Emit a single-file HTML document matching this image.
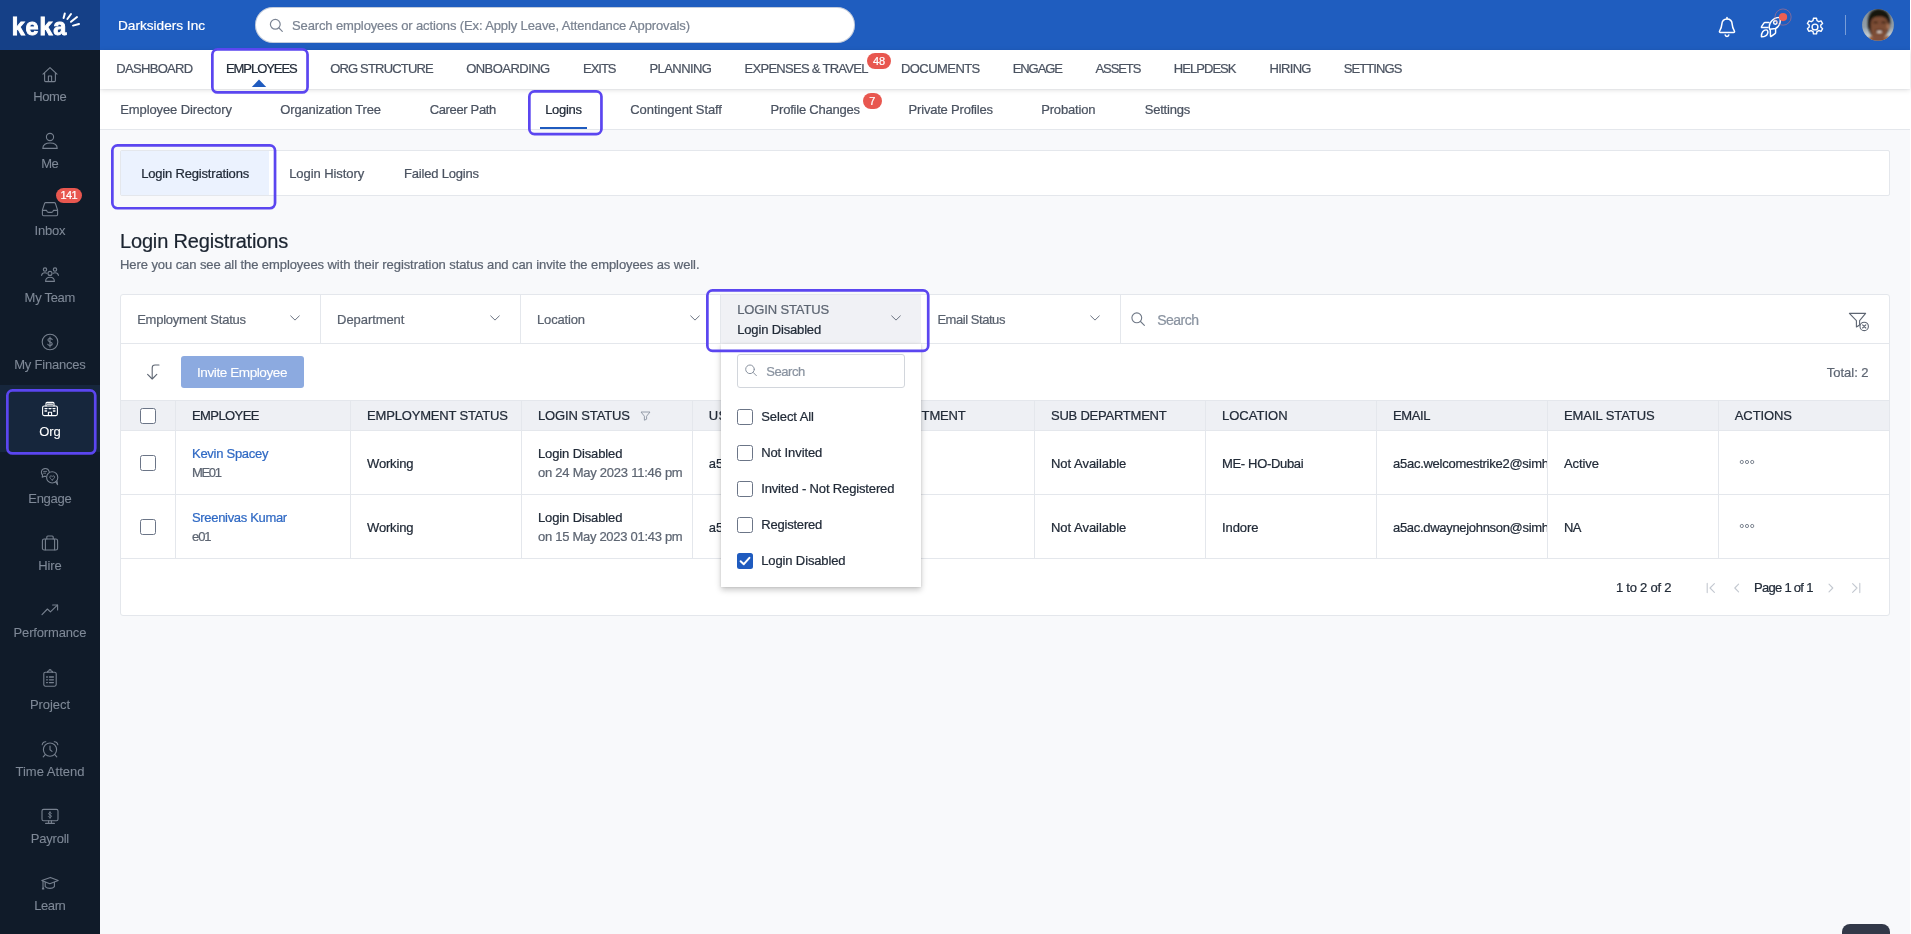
<!DOCTYPE html>
<html><head><meta charset="utf-8"><title>Keka</title>
<style>
html,body{margin:0;padding:0;background:#fff;}
body{width:1911px;height:934px;overflow:hidden;position:relative;font-family:'Liberation Sans', sans-serif;-webkit-text-stroke:0.22px currentColor;}
#root{position:absolute;left:0;top:0;width:1911px;height:934px;overflow:hidden;will-change:transform;}
svg{display:block;overflow:visible;}
</style></head><body><div id="root">
<div style="position:absolute;left:0px;top:0px;width:1910px;height:934px;background:#f8f9fb;"></div>
<div style="position:absolute;left:100px;top:0px;width:1810px;height:50px;background:#1f5dbf;"></div>
<div style="position:absolute;left:100px;top:90px;width:1810px;height:39px;background:#fff;border-bottom:1px solid #e4e7ec;"></div>
<div style="position:absolute;left:100px;top:50px;width:1810px;height:39px;background:#fff;box-shadow:0 1px 5px rgba(0,0,0,.13);"></div>
<div style="position:absolute;left:0px;top:0px;width:100px;height:934px;background:#101b29;"></div>
<div style="position:absolute;left:0px;top:0px;width:100px;height:50px;background:#154087;"></div>
<span style="position:absolute;left:11.8px;top:10.8px;height:33px;line-height:33px;font-size:23.4px;color:#fff;font-weight:700;white-space:pre;letter-spacing:0.784px;-webkit-text-stroke:0.9px #fff;">keka</span>
<svg style="position:absolute;left:60px;top:10px" width="24" height="20" viewBox="0 0 24 20">
<g stroke="#fff" stroke-width="2" stroke-linecap="round" fill="none">
<path d="M4.8 3.4 L3.6 8"/><path d="M11 4 L7.4 9"/><path d="M17 7 L11 11.8"/><path d="M19 14 L13 15.6"/></g></svg>
<span style="position:absolute;left:118px;top:16.0px;height:19px;line-height:19px;font-size:13.6px;color:#fff;font-weight:400;white-space:pre;letter-spacing:0.010px;">Darksiders Inc</span>
<div style="position:absolute;left:255px;top:7px;width:600px;height:36px;background:#fff;border-radius:18px;box-shadow:inset 0 0 0 1px rgba(20,50,110,.25);"></div>
<svg style="position:absolute;left:268px;top:17px" width="16" height="16" viewBox="0 0 16 16"><g fill="none" stroke="#7c8594" stroke-width="1.2" stroke-linecap="round"><circle cx="7.3" cy="7.3" r="4.9"/><path d="M11 11 L14.3 14.3"/></g></svg>
<span style="position:absolute;left:292px;top:16.5px;height:18px;line-height:18px;font-size:13px;color:#7a8391;font-weight:400;white-space:pre;letter-spacing:-0.123px;">Search employees or actions (Ex: Apply Leave, Attendance Approvals)</span>
<svg style="position:absolute;left:1707px;top:6px" width="40" height="40" viewBox="0 0 40 40"><g fill="none" stroke="#fff" stroke-width="1.5" stroke-linecap="round" stroke-linejoin="round">
<path d="M20 11.4 V12.8"/>
<path d="M20 13.1 C16.8 13.1 15 15.4 14.8 18.4 C14.6 21 14.4 22.2 12.7 24.8 C12.1 25.8 12.5 26.5 13.5 26.5 H26.5 C27.5 26.5 27.9 25.8 27.3 24.8 C25.6 22.2 25.4 21 25.2 18.4 C25 15.4 23.2 13.1 20 13.1 Z"/>
<path d="M18.2 28.9 C18.6 30 19.2 30.5 20 30.5 C20.8 30.5 21.4 30 21.8 28.9"/></g></svg>
<svg style="position:absolute;left:1752px;top:4px" width="48" height="40" viewBox="0 0 48 40"><g fill="none" stroke="#fff" stroke-width="1.45" stroke-linecap="round" stroke-linejoin="round">
<path d="M17.7 25.3 C15.9 20.4 20 13.3 27.9 13.4 C29.3 19 26.6 23 23.5 24.5 Z"/>
<circle cx="23.3" cy="18.5" r="1.75"/>
<path d="M17 18.5 H13 Q12.3 18.5 11.9 19.1 L9.5 22.7 Q9.1 23.5 10 23.5 H16"/>
<path d="M18.3 25.9 L18.5 32 Q18.5 32.8 19.2 32.4 L23 29.6 Q23.6 29.2 23.6 28.4 V24.8"/>
<path d="M9.4 32.7 C9.2 28.6 11.5 25.9 14 25.9 C15.7 25.9 16.3 27.5 15.6 29.4 C14.8 31.6 12.6 32.8 9.4 32.7 Z"/>
</g><circle cx="31.05" cy="13.06" r="8.1" fill="none" stroke="rgba(240,120,110,.45)" stroke-width="1"/><circle cx="31.05" cy="13.06" r="4.1" fill="#ea5f52"/></svg>
<svg style="position:absolute;left:1804px;top:16px" width="22" height="22" viewBox="0 0 24 24"><g fill="none" stroke="#fff" stroke-width="1.5" stroke-linejoin="round">
<path d="M10.3 2.5 h3.4 l.5 2.6 a7.3 7.3 0 0 1 1.9 1.1 l2.5 -.9 1.7 2.9 -2 1.7 a7.3 7.3 0 0 1 0 2.2 l2 1.7 -1.7 2.9 -2.5 -.9 a7.3 7.3 0 0 1 -1.9 1.1 l-.5 2.6 h-3.4 l-.5 -2.6 a7.3 7.3 0 0 1 -1.9 -1.1 l-2.5 .9 -1.7 -2.9 2 -1.7 a7.3 7.3 0 0 1 0 -2.2 l-2 -1.7 1.7 -2.9 2.5 .9 a7.3 7.3 0 0 1 1.9 -1.1 z"/>
<circle cx="12" cy="12" r="3.2"/></g></svg>
<div style="position:absolute;left:1845px;top:15px;width:1px;height:20px;background:rgba(255,255,255,.4);"></div>
<svg style="position:absolute;left:1858px;top:5px" width="40" height="40" viewBox="0 0 40 40"><defs><clipPath id="av"><circle cx="20" cy="19.9" r="15.9"/></clipPath><filter id="bl" x="-20%" y="-20%" width="140%" height="140%"><feGaussianBlur stdDeviation="0.9"/></filter>
<linearGradient id="avbg" x1="0" y1="0" x2="0" y2="1"><stop offset="0" stop-color="#7f8c97"/><stop offset="0.55" stop-color="#929ea8"/><stop offset="0.75" stop-color="#c2cace"/><stop offset="1" stop-color="#9aa5ad"/></linearGradient></defs>
<g clip-path="url(#av)"><rect width="40" height="40" fill="url(#avbg)"/><g filter="url(#bl)">
<path d="M10 22 C9 10 13 4 20.5 4 C29 4 33.5 10 32 22 L28 30 H13 Z" fill="#17130f"/>
<path d="M13 19 C12.6 14 15.5 11.6 21 11.4 C27 11.4 30.2 14 30.2 20 C30.2 26 28 31 25 34 L24 37 H15 L15 33 C13 30 12.8 25 12.6 18 Z" fill="#7d4d35"/>
<ellipse cx="30.2" cy="21.5" rx="1.6" ry="3" fill="#a87456"/>
<ellipse cx="17.6" cy="17.4" rx="2.6" ry="0.9" fill="#3a2418"/><ellipse cx="25.6" cy="17.4" rx="2.6" ry="0.9" fill="#3a2418"/>
<ellipse cx="21.6" cy="25.6" rx="4.8" ry="1.2" fill="#5a3020"/>
<ellipse cx="21.4" cy="26.9" rx="2.7" ry="1.05" fill="#e2d6ce"/>
<path d="M9 37 L13 31 L16 33 L26 33 L30 30.5 L33 36 Z" fill="#9a5a32"/>
<path d="M15 31 H26 V37 H15 Z" fill="#80503a"/>
</g></g></svg>
<span style="position:absolute;left:116.2px;top:60.0px;height:18px;line-height:18px;font-size:13px;color:#4b5361;font-weight:400;white-space:pre;letter-spacing:-0.670px;">DASHBOARD</span>
<span style="position:absolute;left:226px;top:60.0px;height:18px;line-height:18px;font-size:13px;color:#222b38;font-weight:400;white-space:pre;letter-spacing:-1.063px;">EMPLOYEES</span>
<span style="position:absolute;left:330.2px;top:60.0px;height:18px;line-height:18px;font-size:13px;color:#4b5361;font-weight:400;white-space:pre;letter-spacing:-0.824px;">ORG STRUCTURE</span>
<span style="position:absolute;left:466.2px;top:60.0px;height:18px;line-height:18px;font-size:13px;color:#4b5361;font-weight:400;white-space:pre;letter-spacing:-0.538px;">ONBOARDING</span>
<span style="position:absolute;left:583px;top:60.0px;height:18px;line-height:18px;font-size:13px;color:#4b5361;font-weight:400;white-space:pre;letter-spacing:-1.020px;">EXITS</span>
<span style="position:absolute;left:649.4px;top:60.0px;height:18px;line-height:18px;font-size:13px;color:#4b5361;font-weight:400;white-space:pre;letter-spacing:-0.553px;">PLANNING</span>
<span style="position:absolute;left:744.5px;top:60.0px;height:18px;line-height:18px;font-size:13px;color:#4b5361;font-weight:400;white-space:pre;letter-spacing:-0.710px;">EXPENSES &amp; TRAVEL</span>
<span style="position:absolute;left:900.9px;top:60.0px;height:18px;line-height:18px;font-size:13px;color:#4b5361;font-weight:400;white-space:pre;letter-spacing:-0.548px;">DOCUMENTS</span>
<span style="position:absolute;left:1012.7px;top:60.0px;height:18px;line-height:18px;font-size:13px;color:#4b5361;font-weight:400;white-space:pre;letter-spacing:-1.065px;">ENGAGE</span>
<span style="position:absolute;left:1095.5px;top:60.0px;height:18px;line-height:18px;font-size:13px;color:#4b5361;font-weight:400;white-space:pre;letter-spacing:-1.099px;">ASSETS</span>
<span style="position:absolute;left:1173.8px;top:60.0px;height:18px;line-height:18px;font-size:13px;color:#4b5361;font-weight:400;white-space:pre;letter-spacing:-0.954px;">HELPDESK</span>
<span style="position:absolute;left:1269.6px;top:60.0px;height:18px;line-height:18px;font-size:13px;color:#4b5361;font-weight:400;white-space:pre;letter-spacing:-0.740px;">HIRING</span>
<span style="position:absolute;left:1343.7px;top:60.0px;height:18px;line-height:18px;font-size:13px;color:#4b5361;font-weight:400;white-space:pre;letter-spacing:-0.888px;">SETTINGS</span>
<svg style="position:absolute;left:251px;top:79px" width="16" height="9" viewBox="0 0 16 9"><path d="M8 0.6 L15.2 8 H0.8 Z" fill="#1f5bbf"/></svg>
<div style="position:absolute;left:867px;top:53px;width:24px;height:16px;background:#e8574f;border-radius:8px;"></div>
<span style="position:absolute;left:729px;width:300px;text-align:center;top:53.7px;height:15px;line-height:15px;font-size:11px;color:#fff;font-weight:400;white-space:pre;">48</span>
<div style="position:absolute;left:862.5px;top:93px;width:19.5px;height:16px;background:#e8574f;border-radius:8px;"></div>
<span style="position:absolute;left:722.2px;width:300px;text-align:center;top:93.7px;height:15px;line-height:15px;font-size:11px;color:#fff;font-weight:400;white-space:pre;">7</span>
<span style="position:absolute;left:120.2px;top:101.0px;height:18px;line-height:18px;font-size:13px;color:#4b5361;font-weight:400;white-space:pre;letter-spacing:-0.096px;">Employee Directory</span>
<span style="position:absolute;left:280.3px;top:101.0px;height:18px;line-height:18px;font-size:13px;color:#4b5361;font-weight:400;white-space:pre;letter-spacing:-0.159px;">Organization Tree</span>
<span style="position:absolute;left:429.7px;top:101.0px;height:18px;line-height:18px;font-size:13px;color:#4b5361;font-weight:400;white-space:pre;letter-spacing:-0.349px;">Career Path</span>
<span style="position:absolute;left:545.2px;top:101.0px;height:18px;line-height:18px;font-size:13px;color:#222b38;font-weight:400;white-space:pre;letter-spacing:-0.303px;">Logins</span>
<span style="position:absolute;left:630.3px;top:101.0px;height:18px;line-height:18px;font-size:13px;color:#4b5361;font-weight:400;white-space:pre;letter-spacing:-0.087px;">Contingent Staff</span>
<span style="position:absolute;left:770.6px;top:101.0px;height:18px;line-height:18px;font-size:13px;color:#4b5361;font-weight:400;white-space:pre;letter-spacing:-0.221px;">Profile Changes</span>
<span style="position:absolute;left:908.6px;top:101.0px;height:18px;line-height:18px;font-size:13px;color:#4b5361;font-weight:400;white-space:pre;letter-spacing:-0.201px;">Private Profiles</span>
<span style="position:absolute;left:1041.2px;top:101.0px;height:18px;line-height:18px;font-size:13px;color:#4b5361;font-weight:400;white-space:pre;letter-spacing:-0.170px;">Probation</span>
<span style="position:absolute;left:1144.7px;top:101.0px;height:18px;line-height:18px;font-size:13px;color:#4b5361;font-weight:400;white-space:pre;letter-spacing:-0.212px;">Settings</span>
<div style="position:absolute;left:539.5px;top:126.5px;width:47.5px;height:2.2px;background:#1f5bbf;"></div>
<div style="position:absolute;left:0px;top:385px;width:100px;height:67px;background:#16263c;"></div>
<svg style="position:absolute;left:6px;top:388.8px" width="90.6" height="65.80000000000001" viewBox="0 0 90.6 65.80000000000001"><rect x="1.35" y="1.35" width="87.89999999999999" height="63.10000000000001" rx="5.15" fill="#16263c" stroke="#5b46f0" stroke-width="2.7"/></svg>
<svg style="position:absolute;left:40px;top:64.5px" width="20" height="20" viewBox="0 0 20 20"><g fill="none" stroke="#77818f" stroke-width="1.1" stroke-linecap="round" stroke-linejoin="round"><path d="M3 9.2 L10 2.6 L17 9.2"/><path d="M4.6 8 V15.6 Q4.6 16.6 5.6 16.6 H14.4 Q15.4 16.6 15.4 15.6 V8"/><path d="M8.4 16.4 V11 H11.6 V16.4"/></g></svg>
<span style="position:absolute;left:-100px;width:300px;text-align:center;text-indent:-0.396px;top:87.7px;height:18px;line-height:18px;font-size:13px;color:#7f8997;font-weight:400;white-space:pre;letter-spacing:-0.396px;-webkit-text-stroke:0.08px currentColor;">Home</span>
<svg style="position:absolute;left:40px;top:131px" width="20" height="20" viewBox="0 0 20 20"><g fill="none" stroke="#77818f" stroke-width="1.1" stroke-linecap="round" stroke-linejoin="round"><circle cx="10" cy="6" r="3.6"/><path d="M2.8 17.4 C2.8 13.6 6 12 10 12 C14 12 17.2 13.6 17.2 17.4 Z"/></g></svg>
<span style="position:absolute;left:-100px;width:300px;text-align:center;text-indent:-0.663px;top:154.6px;height:18px;line-height:18px;font-size:13px;color:#7f8997;font-weight:400;white-space:pre;letter-spacing:-0.663px;-webkit-text-stroke:0.08px currentColor;">Me</span>
<svg style="position:absolute;left:40px;top:198.5px" width="20" height="20" viewBox="0 0 20 20"><g fill="none" stroke="#77818f" stroke-width="1.1" stroke-linecap="round" stroke-linejoin="round"><path d="M2.4 11.2 L4.6 4.4 Q4.9 3.6 5.8 3.6 H14.2 Q15.1 3.6 15.4 4.4 L17.6 11.2 V15.6 Q17.6 16.8 16.4 16.8 H3.6 Q2.4 16.8 2.4 15.6 Z"/><path d="M2.6 11.4 H6.6 Q7 13.4 8.4 13.4 H11.6 Q13 13.4 13.4 11.4 H17.4"/></g></svg>
<span style="position:absolute;left:-100px;width:300px;text-align:center;text-indent:-0.253px;top:221.6px;height:18px;line-height:18px;font-size:13px;color:#7f8997;font-weight:400;white-space:pre;letter-spacing:-0.253px;-webkit-text-stroke:0.08px currentColor;">Inbox</span>
<svg style="position:absolute;left:40px;top:265px" width="20" height="20" viewBox="0 0 20 20"><g fill="none" stroke="#77818f" stroke-width="1.1" stroke-linecap="round" stroke-linejoin="round"><circle cx="10" cy="8.4" r="2"/><path d="M5.6 16.4 C5.6 13.4 7.6 12.2 10 12.2 C12.4 12.2 14.4 13.4 14.4 16.4 Z"/><circle cx="5" cy="4.6" r="1.7"/><circle cx="15" cy="4.6" r="1.7"/><path d="M1.6 10.4 C1.8 8.6 3.2 7.8 5 7.8 C5.8 7.8 6.4 8 6.8 8.2"/><path d="M18.4 10.4 C18.2 8.6 16.8 7.8 15 7.8 C14.2 7.8 13.6 8 13.2 8.2"/></g></svg>
<span style="position:absolute;left:-100px;width:300px;text-align:center;text-indent:-0.283px;top:288.6px;height:18px;line-height:18px;font-size:13px;color:#7f8997;font-weight:400;white-space:pre;letter-spacing:-0.283px;-webkit-text-stroke:0.08px currentColor;">My Team</span>
<svg style="position:absolute;left:40px;top:332px" width="20" height="20" viewBox="0 0 20 20"><g fill="none" stroke="#77818f" stroke-width="1.1" stroke-linecap="round" stroke-linejoin="round"><circle cx="10" cy="10" r="7.8"/><path d="M12.2 7.6 C11.8 6.8 11 6.5 10 6.5 C8.8 6.5 7.9 7.1 7.9 8.1 C7.9 10.4 12.2 9.4 12.2 11.8 C12.2 12.9 11.2 13.5 10 13.5 C8.9 13.5 8 13.1 7.7 12.2"/><path d="M10 5 V15"/></g></svg>
<span style="position:absolute;left:-100px;width:300px;text-align:center;text-indent:-0.210px;top:355.6px;height:18px;line-height:18px;font-size:13px;color:#7f8997;font-weight:400;white-space:pre;letter-spacing:-0.210px;-webkit-text-stroke:0.08px currentColor;">My Finances</span>
<svg style="position:absolute;left:40px;top:398.5px" width="20" height="20" viewBox="0 0 20 20"><g fill="none" stroke="#ffffff" stroke-width="1.1" stroke-linecap="round" stroke-linejoin="round"><rect x="2.6" y="7" width="14.8" height="9.6" rx="1.6"/><path d="M6 7 V4.4 Q6 3.4 7 3.4 H13 Q14 3.4 14 4.4 V7"/><path d="M8.4 16.4 V13.2 H11.6 V16.4"/><path d="M5 9.6 H7 M9 9.6 H11 M13 9.6 H15 M5 12 H6.6 M13.4 12 H15" stroke-width="1.3"/><path d="M7.6 5.2 H12.4" stroke-width="1.2"/></g></svg>
<span style="position:absolute;left:-100px;width:300px;text-align:center;text-indent:-0.136px;top:422.6px;height:18px;line-height:18px;font-size:13px;color:#fff;font-weight:400;white-space:pre;letter-spacing:-0.136px;-webkit-text-stroke:0.08px currentColor;">Org</span>
<svg style="position:absolute;left:40px;top:466px" width="20" height="20" viewBox="0 0 20 20"><g fill="none" stroke="#77818f" stroke-width="1.1" stroke-linecap="round" stroke-linejoin="round"><path d="M9.2 5.6 C8.6 3.6 6.8 2.4 4.8 2.6 C2.6 2.8 1.2 4.6 1.4 6.6 C1.5 7.6 2 8.4 2.6 9 L2.2 11.2 L4.4 10.2 C4.8 10.3 5.2 10.4 5.6 10.4"/><circle cx="12.2" cy="11.4" r="5.6"/><path d="M15.6 15.8 L17.6 18.6 L17 15"/><path d="M12.2 14 C10.8 13 9.8 12 9.8 11 C9.8 9.8 11.4 9.4 12.2 10.6 C13 9.4 14.6 9.8 14.6 11 C14.6 12 13.6 13 12.2 14 Z" stroke-width="0.9"/><path d="M3.6 5.4 H6.6 M3.6 7.2 H5.6" stroke-width="0.9"/></g></svg>
<span style="position:absolute;left:-100px;width:300px;text-align:center;text-indent:-0.266px;top:489.5px;height:18px;line-height:18px;font-size:13px;color:#7f8997;font-weight:400;white-space:pre;letter-spacing:-0.266px;-webkit-text-stroke:0.08px currentColor;">Engage</span>
<svg style="position:absolute;left:40px;top:533.3px" width="20" height="20" viewBox="0 0 20 20"><g fill="none" stroke="#77818f" stroke-width="1.1" stroke-linecap="round" stroke-linejoin="round"><rect x="2.4" y="6" width="15.2" height="11" rx="1.8"/><path d="M6.8 6 V4 Q6.8 3 7.8 3 H12.2 Q13.2 3 13.2 4 V6"/><path d="M5.4 6.2 V16.8 M14.6 6.2 V16.8"/></g></svg>
<span style="position:absolute;left:-100px;width:300px;text-align:center;text-indent:-0.081px;top:556.6px;height:18px;line-height:18px;font-size:13px;color:#7f8997;font-weight:400;white-space:pre;letter-spacing:-0.081px;-webkit-text-stroke:0.08px currentColor;">Hire</span>
<svg style="position:absolute;left:40px;top:600px" width="20" height="20" viewBox="0 0 20 20"><g fill="none" stroke="#77818f" stroke-width="1.1" stroke-linecap="round" stroke-linejoin="round"><path d="M2 14.6 L7.4 9 L10.4 11.8 L17.4 5.2"/><path d="M12.6 5 H17.6 V10"/></g></svg>
<span style="position:absolute;left:-100px;width:300px;text-align:center;text-indent:-0.162px;top:623.8px;height:18px;line-height:18px;font-size:13px;color:#7f8997;font-weight:400;white-space:pre;letter-spacing:-0.162px;-webkit-text-stroke:0.08px currentColor;">Performance</span>
<svg style="position:absolute;left:40px;top:667.6px" width="20" height="20" viewBox="0 0 20 20"><g fill="none" stroke="#77818f" stroke-width="1.1" stroke-linecap="round" stroke-linejoin="round"><rect x="3.8" y="4.2" width="12.4" height="14" rx="1.6"/><path d="M7.6 4.2 V3.2 H8.8 Q8.8 1.6 10 1.6 Q11.2 1.6 11.2 3.2 H12.4 V4.2"/><path d="M6.6 9 H7.4 M9.4 9 H13.4 M6.6 11.8 H7.4 M9.4 11.8 H13.4 M6.6 14.6 H7.4 M9.4 14.6 H13.4" stroke-width="1.3"/></g></svg>
<span style="position:absolute;left:-100px;width:300px;text-align:center;text-indent:-0.045px;top:695.8px;height:18px;line-height:18px;font-size:13px;color:#7f8997;font-weight:400;white-space:pre;letter-spacing:-0.045px;-webkit-text-stroke:0.08px currentColor;">Project</span>
<svg style="position:absolute;left:40px;top:739px" width="20" height="20" viewBox="0 0 20 20"><g fill="none" stroke="#77818f" stroke-width="1.1" stroke-linecap="round" stroke-linejoin="round"><circle cx="10" cy="10.6" r="6.6"/><path d="M10 7 V10.8 L12 12.4"/><path d="M2.2 5.8 C2.4 3.8 4 2.6 5.8 2.8"/><path d="M17.8 5.8 C17.6 3.8 16 2.6 14.2 2.8"/><path d="M5.2 15.6 L3.2 17.8 M14.8 15.6 L16.8 17.8"/></g></svg>
<span style="position:absolute;left:-100px;width:300px;text-align:center;text-indent:0.031px;top:763.0px;height:18px;line-height:18px;font-size:13px;color:#7f8997;font-weight:400;white-space:pre;letter-spacing:0.031px;-webkit-text-stroke:0.08px currentColor;">Time Attend</span>
<svg style="position:absolute;left:40px;top:805.8px" width="20" height="20" viewBox="0 0 20 20"><g fill="none" stroke="#77818f" stroke-width="1.1" stroke-linecap="round" stroke-linejoin="round"><rect x="2" y="3.4" width="16" height="11.4" rx="1.6"/><path d="M8.6 14.8 V17.2 M11.4 14.8 V17.2 M5.6 17.4 H14.4"/><path d="M11.4 7.4 C11.2 6.8 10.7 6.6 10 6.6 C9.2 6.6 8.6 7 8.6 7.7 C8.6 9.3 11.5 8.6 11.5 10.3 C11.5 11 10.8 11.4 10 11.4 C9.2 11.4 8.6 11.1 8.4 10.5 M10 5.6 V12.4" stroke-width="0.9"/></g></svg>
<span style="position:absolute;left:-100px;width:300px;text-align:center;text-indent:-0.225px;top:830.0px;height:18px;line-height:18px;font-size:13px;color:#7f8997;font-weight:400;white-space:pre;letter-spacing:-0.225px;-webkit-text-stroke:0.08px currentColor;">Payroll</span>
<svg style="position:absolute;left:40px;top:873.4px" width="20" height="20" viewBox="0 0 20 20"><g fill="none" stroke="#77818f" stroke-width="1.1" stroke-linecap="round" stroke-linejoin="round"><path d="M1.8 7.6 L10.4 4.4 L18.2 7.4 L9.8 10.8 Z"/><path d="M5.2 9.2 V13.6 C6.6 15 8.4 15.4 10 15.4 C11.6 15.4 13.4 14.8 14.4 13.6 V9.2"/><path d="M3 8.2 V14.4 L2.4 16 H3.8 L3.2 14.4"/></g></svg>
<span style="position:absolute;left:-100px;width:300px;text-align:center;text-indent:-0.388px;top:896.8px;height:18px;line-height:18px;font-size:13px;color:#7f8997;font-weight:400;white-space:pre;letter-spacing:-0.388px;-webkit-text-stroke:0.08px currentColor;">Learn</span>
<div style="position:absolute;left:55.7px;top:187.8px;width:26.8px;height:15px;background:#e8574f;border-radius:7.5px;"></div>
<span style="position:absolute;left:-80.9px;width:300px;text-align:center;text-indent:-0.680px;top:188.1px;height:15px;line-height:15px;font-size:11px;color:#fff;font-weight:400;white-space:pre;letter-spacing:-0.680px;">141</span>
<div style="position:absolute;left:120px;top:150px;width:1770px;height:46px;background:#fff;border:1px solid #e4e7ec;box-sizing:border-box;border-radius:2px;"></div>
<div style="position:absolute;left:121px;top:151px;width:148px;height:44px;background:#ebf2fe;"></div>
<span style="position:absolute;left:141.2px;top:165.0px;height:18px;line-height:18px;font-size:13px;color:#222b38;font-weight:400;white-space:pre;letter-spacing:-0.183px;">Login Registrations</span>
<span style="position:absolute;left:289.2px;top:165.0px;height:18px;line-height:18px;font-size:13px;color:#4b5361;font-weight:400;white-space:pre;letter-spacing:-0.073px;">Login History</span>
<span style="position:absolute;left:404px;top:165.0px;height:18px;line-height:18px;font-size:13px;color:#4b5361;font-weight:400;white-space:pre;letter-spacing:-0.194px;">Failed Logins</span>
<span style="position:absolute;left:120px;top:226.5px;height:28px;line-height:28px;font-size:20px;color:#1b2430;font-weight:400;white-space:pre;letter-spacing:-0.168px;">Login Registrations</span>
<span style="position:absolute;left:120px;top:256.0px;height:18px;line-height:18px;font-size:13px;color:#5d6572;font-weight:400;white-space:pre;letter-spacing:-0.078px;">Here you can see all the employees with their registration status and can invite the employees as well.</span>
<div style="position:absolute;left:120px;top:294px;width:1770px;height:322px;background:#fff;border:1px solid #e4e7ec;box-sizing:border-box;border-radius:3px;"></div>
<div style="position:absolute;left:121px;top:343px;width:1767.5px;height:1px;background:#e4e7ec;"></div>
<div style="position:absolute;left:320px;top:295px;width:1px;height:48px;background:#e4e7ec;"></div>
<div style="position:absolute;left:520px;top:295px;width:1px;height:48px;background:#e4e7ec;"></div>
<div style="position:absolute;left:720px;top:295px;width:1px;height:48px;background:#e4e7ec;"></div>
<div style="position:absolute;left:920px;top:295px;width:1px;height:48px;background:#e4e7ec;"></div>
<div style="position:absolute;left:1120px;top:295px;width:1px;height:48px;background:#e4e7ec;"></div>
<div style="position:absolute;left:721px;top:295px;width:199.5px;height:48.5px;background:#f0f1f5;"></div>
<span style="position:absolute;left:137.2px;top:311.0px;height:18px;line-height:18px;font-size:13px;color:#59616e;font-weight:400;white-space:pre;letter-spacing:-0.245px;">Employment Status</span>
<svg style="position:absolute;left:289.4px;top:314.4px" width="12" height="8" viewBox="0 0 12 8"><path d="M1.7 1.9 L6 6.1 L10.3 1.9" fill="none" stroke="#6b7381" stroke-width="1" stroke-linecap="round" stroke-linejoin="round"/></svg>
<span style="position:absolute;left:337.1px;top:311.0px;height:18px;line-height:18px;font-size:13px;color:#59616e;font-weight:400;white-space:pre;letter-spacing:-0.069px;">Department</span>
<svg style="position:absolute;left:489.4px;top:314.4px" width="12" height="8" viewBox="0 0 12 8"><path d="M1.7 1.9 L6 6.1 L10.3 1.9" fill="none" stroke="#6b7381" stroke-width="1" stroke-linecap="round" stroke-linejoin="round"/></svg>
<span style="position:absolute;left:537px;top:311.0px;height:18px;line-height:18px;font-size:13px;color:#59616e;font-weight:400;white-space:pre;letter-spacing:-0.165px;">Location</span>
<svg style="position:absolute;left:689px;top:314.4px" width="12" height="8" viewBox="0 0 12 8"><path d="M1.7 1.9 L6 6.1 L10.3 1.9" fill="none" stroke="#6b7381" stroke-width="1" stroke-linecap="round" stroke-linejoin="round"/></svg>
<span style="position:absolute;left:737.2px;top:300.5px;height:18px;line-height:18px;font-size:13px;color:#5d6572;font-weight:400;white-space:pre;letter-spacing:-0.129px;">LOGIN STATUS</span>
<svg style="position:absolute;left:890px;top:314.4px" width="12" height="8" viewBox="0 0 12 8"><path d="M1.7 1.9 L6 6.1 L10.3 1.9" fill="none" stroke="#6b7381" stroke-width="1" stroke-linecap="round" stroke-linejoin="round"/></svg>
<span style="position:absolute;left:737.2px;top:320.5px;height:18px;line-height:18px;font-size:13px;color:#222b38;font-weight:400;white-space:pre;letter-spacing:-0.155px;">Login Disabled</span>
<span style="position:absolute;left:937.4px;top:311.0px;height:18px;line-height:18px;font-size:13px;color:#59616e;font-weight:400;white-space:pre;letter-spacing:-0.453px;">Email Status</span>
<svg style="position:absolute;left:1089.4px;top:314.4px" width="12" height="8" viewBox="0 0 12 8"><path d="M1.7 1.9 L6 6.1 L10.3 1.9" fill="none" stroke="#6b7381" stroke-width="1" stroke-linecap="round" stroke-linejoin="round"/></svg>
<svg style="position:absolute;left:1130px;top:311px" width="16" height="16" viewBox="0 0 16 16"><g fill="none" stroke="#6f7886" stroke-width="1.1" stroke-linecap="round"><circle cx="6.8" cy="6.8" r="4.9"/><path d="M10.5 10.5 L14.4 14.4"/></g></svg>
<span style="position:absolute;left:1157.2px;top:310.0px;height:20px;line-height:20px;font-size:14px;color:#8a93a0;font-weight:400;white-space:pre;letter-spacing:-0.512px;">Search</span>
<svg style="position:absolute;left:1847px;top:311px" width="24" height="22" viewBox="0 0 24 22"><g fill="none" stroke="#5d6572" stroke-width="1.1" stroke-linejoin="round" stroke-linecap="round">
<path d="M2.4 2.4 H18.6 L12.6 9.6 V14 L9.4 16 V9.6 Z"/><circle cx="17.2" cy="15.4" r="4.2" fill="#fff"/><path d="M15.6 13.8 L18.8 17 M18.8 13.8 L15.6 17"/></g></svg>
<svg style="position:absolute;left:145px;top:363px" width="16" height="18" viewBox="0 0 16 18"><g fill="none" stroke="#5d6572" stroke-width="1.1" stroke-linecap="round" stroke-linejoin="round">
<path d="M14 2 H10 Q7.2 2 7.2 4.8 V15.6"/><path d="M2.6 11.4 L7.2 16 L11.8 11.4"/></g></svg>
<div style="position:absolute;left:181px;top:356px;width:123px;height:32px;background:#8caae0;border-radius:3px;"></div>
<span style="position:absolute;left:197px;top:362.8px;height:19px;line-height:19px;font-size:13.6px;color:#fff;font-weight:400;white-space:pre;letter-spacing:-0.444px;-webkit-text-stroke:0.1px #fff;">Invite Employee</span>
<span style="position:absolute;right:42.40000000000009px;text-align:right;top:363.8px;height:18px;line-height:18px;font-size:13px;color:#5d6572;font-weight:400;white-space:pre;">Total: 2</span>
<div style="position:absolute;left:121px;top:400px;width:1768px;height:31px;background:#eef0f4;border-top:1px solid #e4e7ec;border-bottom:1px solid #e4e7ec;box-sizing:border-box;"></div>
<div style="position:absolute;left:121px;top:494px;width:1767.5px;height:1px;background:#e4e7ec;"></div>
<div style="position:absolute;left:121px;top:558px;width:1767.5px;height:1px;background:#e4e7ec;"></div>
<div style="position:absolute;left:175px;top:401px;width:1px;height:157.5px;background:#e4e7ec;"></div>
<div style="position:absolute;left:350px;top:401px;width:1px;height:157.5px;background:#e4e7ec;"></div>
<div style="position:absolute;left:521px;top:401px;width:1px;height:157.5px;background:#e4e7ec;"></div>
<div style="position:absolute;left:692px;top:401px;width:1px;height:157.5px;background:#e4e7ec;"></div>
<div style="position:absolute;left:863px;top:401px;width:1px;height:157.5px;background:#e4e7ec;"></div>
<div style="position:absolute;left:1034px;top:401px;width:1px;height:157.5px;background:#e4e7ec;"></div>
<div style="position:absolute;left:1205px;top:401px;width:1px;height:157.5px;background:#e4e7ec;"></div>
<div style="position:absolute;left:1376px;top:401px;width:1px;height:157.5px;background:#e4e7ec;"></div>
<div style="position:absolute;left:1547px;top:401px;width:1px;height:157.5px;background:#e4e7ec;"></div>
<div style="position:absolute;left:1718px;top:401px;width:1px;height:157.5px;background:#e4e7ec;"></div>
<div style="position:absolute;left:140px;top:408px;width:16px;height:16px;background:#fff;border:1px solid #6b7587;border-radius:2.5px;box-sizing:border-box;"></div>
<div style="position:absolute;left:140px;top:455px;width:16px;height:16px;background:#fff;border:1px solid #6b7587;border-radius:2.5px;box-sizing:border-box;"></div>
<div style="position:absolute;left:140px;top:519px;width:16px;height:16px;background:#fff;border:1px solid #6b7587;border-radius:2.5px;box-sizing:border-box;"></div>
<span style="position:absolute;left:192px;top:406.7px;height:18px;line-height:18px;font-size:13px;color:#222b38;font-weight:400;white-space:pre;letter-spacing:-0.590px;">EMPLOYEE</span>
<span style="position:absolute;left:367px;top:406.7px;height:18px;line-height:18px;font-size:13px;color:#222b38;font-weight:400;white-space:pre;letter-spacing:-0.172px;">EMPLOYMENT STATUS</span>
<span style="position:absolute;left:538px;top:406.7px;height:18px;line-height:18px;font-size:13px;color:#222b38;font-weight:400;white-space:pre;letter-spacing:-0.129px;">LOGIN STATUS</span>
<span style="position:absolute;left:708.8px;top:406.7px;height:18px;line-height:18px;font-size:13px;color:#222b38;font-weight:400;white-space:pre;letter-spacing:0.359px;">USERNAME</span>
<span style="position:absolute;left:921.6px;top:406.7px;height:18px;line-height:18px;font-size:13px;color:#222b38;font-weight:400;white-space:pre;letter-spacing:-0.145px;">TMENT</span>
<span style="position:absolute;left:1051px;top:406.7px;height:18px;line-height:18px;font-size:13px;color:#222b38;font-weight:400;white-space:pre;letter-spacing:-0.231px;">SUB DEPARTMENT</span>
<span style="position:absolute;left:1222px;top:406.7px;height:18px;line-height:18px;font-size:13px;color:#222b38;font-weight:400;white-space:pre;letter-spacing:0.014px;">LOCATION</span>
<span style="position:absolute;left:1393px;top:406.7px;height:18px;line-height:18px;font-size:13px;color:#222b38;font-weight:400;white-space:pre;letter-spacing:-0.404px;">EMAIL</span>
<span style="position:absolute;left:1564px;top:406.7px;height:18px;line-height:18px;font-size:13px;color:#222b38;font-weight:400;white-space:pre;letter-spacing:-0.073px;">EMAIL STATUS</span>
<span style="position:absolute;left:1734.8px;top:406.7px;height:18px;line-height:18px;font-size:13px;color:#222b38;font-weight:400;white-space:pre;letter-spacing:-0.099px;">ACTIONS</span>
<svg style="position:absolute;left:640px;top:411px" width="11" height="10" viewBox="0 0 11 10"><path d="M1 1 H10 L6.6 5.2 V8.2 L4.4 9.2 V5.2 Z" fill="none" stroke="#8b93a0" stroke-width="0.9" stroke-linejoin="round"/></svg>
<span style="position:absolute;left:192px;top:444.6px;height:18px;line-height:18px;font-size:13px;color:#2f69c4;font-weight:400;white-space:pre;letter-spacing:-0.273px;">Kevin Spacey</span>
<span style="position:absolute;left:192px;top:463.7px;height:18px;line-height:18px;font-size:13px;color:#5d6572;font-weight:400;white-space:pre;letter-spacing:-1.323px;">ME01</span>
<span style="position:absolute;left:367px;top:454.7px;height:18px;line-height:18px;font-size:13px;color:#222b38;font-weight:400;white-space:pre;letter-spacing:-0.159px;">Working</span>
<span style="position:absolute;left:538px;top:444.6px;height:18px;line-height:18px;font-size:13px;color:#222b38;font-weight:400;white-space:pre;letter-spacing:-0.124px;">Login Disabled</span>
<span style="position:absolute;left:538px;top:463.7px;height:18px;line-height:18px;font-size:13px;color:#5d6572;font-weight:400;white-space:pre;letter-spacing:-0.245px;">on 24 May 2023 11:46 pm</span>
<span style="position:absolute;left:708.8px;top:454.7px;height:18px;line-height:18px;font-size:13px;color:#222b38;font-weight:400;white-space:pre;">a5ac</span>
<span style="position:absolute;left:1051px;top:454.7px;height:18px;line-height:18px;font-size:13px;color:#222b38;font-weight:400;white-space:pre;letter-spacing:-0.030px;">Not Available</span>
<span style="position:absolute;left:1222px;top:454.7px;height:18px;line-height:18px;font-size:13px;color:#222b38;font-weight:400;white-space:pre;letter-spacing:-0.332px;">ME- HO-Dubai</span>
<span style="position:absolute;left:1393px;top:454.7px;height:18px;line-height:18px;font-size:13px;color:#222b38;font-weight:400;white-space:pre;letter-spacing:-0.261px;width:154px;overflow:hidden;">a5ac.welcomestrike2@simhadri.com</span>
<span style="position:absolute;left:1564px;top:454.7px;height:18px;line-height:18px;font-size:13px;color:#222b38;font-weight:400;white-space:pre;letter-spacing:-0.081px;">Active</span>
<svg style="position:absolute;left:1739px;top:458.7px" width="16" height="6" viewBox="0 0 16 6"><g fill="none" stroke="#6f7886" stroke-width="0.9"><circle cx="2.8" cy="3" r="1.6"/><circle cx="8" cy="3" r="1.6"/><circle cx="13.2" cy="3" r="1.6"/></g></svg>
<span style="position:absolute;left:192px;top:508.6px;height:18px;line-height:18px;font-size:13px;color:#2f69c4;font-weight:400;white-space:pre;letter-spacing:-0.323px;">Sreenivas Kumar</span>
<span style="position:absolute;left:192px;top:527.7px;height:18px;line-height:18px;font-size:13px;color:#5d6572;font-weight:400;white-space:pre;letter-spacing:-1.102px;">e01</span>
<span style="position:absolute;left:367px;top:518.7px;height:18px;line-height:18px;font-size:13px;color:#222b38;font-weight:400;white-space:pre;letter-spacing:-0.159px;">Working</span>
<span style="position:absolute;left:538px;top:508.6px;height:18px;line-height:18px;font-size:13px;color:#222b38;font-weight:400;white-space:pre;letter-spacing:-0.124px;">Login Disabled</span>
<span style="position:absolute;left:538px;top:527.7px;height:18px;line-height:18px;font-size:13px;color:#5d6572;font-weight:400;white-space:pre;letter-spacing:-0.289px;">on 15 May 2023 01:43 pm</span>
<span style="position:absolute;left:708.8px;top:518.7px;height:18px;line-height:18px;font-size:13px;color:#222b38;font-weight:400;white-space:pre;">a5ac</span>
<span style="position:absolute;left:1051px;top:518.7px;height:18px;line-height:18px;font-size:13px;color:#222b38;font-weight:400;white-space:pre;letter-spacing:-0.030px;">Not Available</span>
<span style="position:absolute;left:1222px;top:518.7px;height:18px;line-height:18px;font-size:13px;color:#222b38;font-weight:400;white-space:pre;letter-spacing:-0.095px;">Indore</span>
<span style="position:absolute;left:1393px;top:518.7px;height:18px;line-height:18px;font-size:13px;color:#222b38;font-weight:400;white-space:pre;letter-spacing:-0.307px;width:154px;overflow:hidden;">a5ac.dwaynejohnson@simhadri.com</span>
<span style="position:absolute;left:1564px;top:518.7px;height:18px;line-height:18px;font-size:13px;color:#222b38;font-weight:400;white-space:pre;letter-spacing:-0.562px;">NA</span>
<svg style="position:absolute;left:1739px;top:522.7px" width="16" height="6" viewBox="0 0 16 6"><g fill="none" stroke="#6f7886" stroke-width="0.9"><circle cx="2.8" cy="3" r="1.6"/><circle cx="8" cy="3" r="1.6"/><circle cx="13.2" cy="3" r="1.6"/></g></svg>
<span style="position:absolute;left:1616px;top:579.0px;height:18px;line-height:18px;font-size:13px;color:#222b38;font-weight:400;white-space:pre;letter-spacing:-0.243px;">1 to 2 of 2</span>
<span style="position:absolute;left:1754px;top:579.0px;height:18px;line-height:18px;font-size:13px;color:#222b38;font-weight:400;white-space:pre;letter-spacing:-0.710px;">Page 1 of 1</span>
<svg style="position:absolute;left:1705px;top:582px" width="12" height="12" viewBox="0 0 12 12"><path d="M2.2 1.4 V10.6 M9.4 1.6 L5 6 L9.4 10.4" fill="none" stroke="#c3c8d0" stroke-width="1.1" stroke-linecap="round" stroke-linejoin="round"/></svg>
<svg style="position:absolute;left:1731px;top:582px" width="12" height="12" viewBox="0 0 12 12"><path d="M7.6 2.2 L3.8 6 L7.6 9.8" fill="none" stroke="#c3c8d0" stroke-width="1.1" stroke-linecap="round" stroke-linejoin="round"/></svg>
<svg style="position:absolute;left:1825px;top:582px" width="12" height="12" viewBox="0 0 12 12"><path d="M4 2.2 L7.8 6 L4 9.8" fill="none" stroke="#c3c8d0" stroke-width="1.1" stroke-linecap="round" stroke-linejoin="round"/></svg>
<svg style="position:absolute;left:1850px;top:582px" width="12" height="12" viewBox="0 0 12 12"><path d="M9.8 1.4 V10.6 M2.6 1.6 L7 6 L2.6 10.4" fill="none" stroke="#c3c8d0" stroke-width="1.1" stroke-linecap="round" stroke-linejoin="round"/></svg>
<div style="position:absolute;left:721px;top:344px;width:200px;height:243px;background:#fff;box-shadow:0 3px 6px rgba(0,0,0,.22),0 0 2px rgba(0,0,0,.12);"></div>
<div style="position:absolute;left:737px;top:354px;width:168px;height:34px;background:#fff;border:1px solid #d2d6dc;border-radius:3px;box-sizing:border-box;"></div>
<svg style="position:absolute;left:744px;top:363px" width="14" height="14" viewBox="0 0 14 14"><g fill="none" stroke="#8a93a0" stroke-width="1" stroke-linecap="round"><circle cx="6" cy="6.3" r="4.3"/><path d="M9.2 9.5 L12.4 12.7"/></g></svg>
<span style="position:absolute;left:766.3px;top:362.5px;height:18px;line-height:18px;font-size:13px;color:#8a93a0;font-weight:400;white-space:pre;letter-spacing:-0.441px;">Search</span>
<div style="position:absolute;left:737px;top:409px;width:16px;height:16px;background:#fff;border:1px solid #6b7587;border-radius:2.5px;box-sizing:border-box;"></div>
<span style="position:absolute;left:761.2px;top:408.0px;height:18px;line-height:18px;font-size:13px;color:#222b38;font-weight:400;white-space:pre;letter-spacing:-0.076px;">Select All</span>
<div style="position:absolute;left:737px;top:445px;width:16px;height:16px;background:#fff;border:1px solid #6b7587;border-radius:2.5px;box-sizing:border-box;"></div>
<span style="position:absolute;left:761.2px;top:444.0px;height:18px;line-height:18px;font-size:13px;color:#222b38;font-weight:400;white-space:pre;letter-spacing:-0.106px;">Not Invited</span>
<div style="position:absolute;left:737px;top:481px;width:16px;height:16px;background:#fff;border:1px solid #6b7587;border-radius:2.5px;box-sizing:border-box;"></div>
<span style="position:absolute;left:761.2px;top:480.0px;height:18px;line-height:18px;font-size:13px;color:#222b38;font-weight:400;white-space:pre;letter-spacing:-0.147px;">Invited - Not Registered</span>
<div style="position:absolute;left:737px;top:517px;width:16px;height:16px;background:#fff;border:1px solid #6b7587;border-radius:2.5px;box-sizing:border-box;"></div>
<span style="position:absolute;left:761.2px;top:516.0px;height:18px;line-height:18px;font-size:13px;color:#222b38;font-weight:400;white-space:pre;letter-spacing:-0.197px;">Registered</span>
<div style="position:absolute;left:737px;top:553px;width:16px;height:16px;background:#1f5bbf;border-radius:2.5px;"><svg width="16" height="16" viewBox="0 0 16 16"><path d="M3.6 8.2 L6.8 11.2 L12.4 4.8" fill="none" stroke="#fff" stroke-width="2" stroke-linecap="round" stroke-linejoin="round"/></svg></div>
<span style="position:absolute;left:761.2px;top:552.0px;height:18px;line-height:18px;font-size:13px;color:#222b38;font-weight:400;white-space:pre;letter-spacing:-0.124px;">Login Disabled</span>
<svg style="position:absolute;left:211.3px;top:48.4px" width="97.89999999999998" height="45.800000000000004" viewBox="0 0 97.89999999999998 45.800000000000004"><rect x="1.35" y="1.35" width="95.19999999999997" height="43.1" rx="5.15" fill="none" stroke="#5b46f0" stroke-width="2.7"/></svg>
<svg style="position:absolute;left:528.2px;top:90px" width="74.79999999999995" height="45.400000000000006" viewBox="0 0 74.79999999999995 45.400000000000006"><rect x="1.35" y="1.35" width="72.09999999999995" height="42.7" rx="5.15" fill="none" stroke="#5b46f0" stroke-width="2.7"/></svg>
<svg style="position:absolute;left:110.5px;top:144px" width="165.39999999999998" height="65.6" viewBox="0 0 165.39999999999998 65.6"><rect x="1.35" y="1.35" width="162.7" height="62.89999999999999" rx="5.15" fill="none" stroke="#5b46f0" stroke-width="2.7"/></svg>
<svg style="position:absolute;left:705.9px;top:289px" width="223.60000000000002" height="63.19999999999999" viewBox="0 0 223.60000000000002 63.19999999999999"><rect x="1.35" y="1.35" width="220.90000000000003" height="60.499999999999986" rx="5.15" fill="none" stroke="#5b46f0" stroke-width="2.7"/></svg>
<div style="position:absolute;left:1842px;top:924px;width:48px;height:20px;background:#323848;border-radius:8px;"></div>
</div></body></html>
